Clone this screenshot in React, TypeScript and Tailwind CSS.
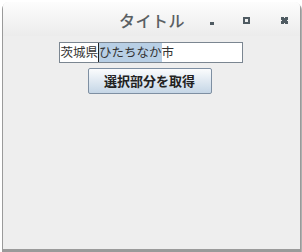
import React from "react";

export default function App() {
  const cjk = { fontFamily: '"Noto Sans CJK JP", "Noto Sans", sans-serif' };
  return (
    <div className="w-[302px] h-[252px] bg-white relative">
      <div className="absolute left-[2px] top-[1px] w-[299px] h-[250px] rounded-t-[6px] bg-[#9a9a9a] shadow-[1px_1px_1px_rgba(0,0,0,0.35)]" />
      <div className="relative ml-[3px] mt-[2px] w-[297px] h-[247px] rounded-t-[5px] overflow-hidden flex flex-col bg-[#eeeeee]">
        <div className="h-[34px] flex items-center bg-gradient-to-b from-[#fdfdfd] to-[#ececec] relative">
          <div
            className="absolute left-[116px] top-[6px] text-[16px] font-medium text-[#5a5f63] tracking-[0.5px]"
            style={cjk}
          >
            タイトル
          </div>
          <div className="absolute left-[207px] top-[20px] w-[4px] h-[3px] bg-[#4f5b62]" />
          <div className="absolute left-[240px] top-[15px] w-[7px] h-[7px] bg-[#4f5b62] flex items-center justify-center">
            <div className="w-[3px] h-[3px] bg-[#f0f0f0]" />
          </div>
          <div className="absolute left-[278px] top-[15px] w-[7px] h-[7px]">
            <svg width="7" height="7" viewBox="0 0 7 7">
              <path d="M0 0h3v1h1v-1h3v3h-1v1h1v3h-3v-1h-1v1h-3v-3h1v-1h-1z" fill="#4f5b62" />
            </svg>
          </div>
        </div>
        <div className="flex flex-col items-center pt-[6px]">
          <div className="ml-[-2px] w-[184px] h-[21px] border border-[#7b8691] bg-white flex items-stretch pl-[1px] text-[12.5px] text-[#333] leading-none" style={cjk}>
            <span className="flex items-center">茨城県</span>
            <span className="flex items-center bg-[#b8cfe5] border-l border-[#222]">ひたちなか</span>
            <span className="flex items-center">市</span>
          </div>
          <button
            className="mt-[5px] ml-[-4px] w-[124px] h-[26px] border border-[#7e8fa2] rounded-[2px] bg-gradient-to-b from-[#fbfcfd] to-[#c5d6e6] text-[13px] font-bold text-[#222] flex items-center justify-center"
            style={cjk}
          >
            選択部分を取得
          </button>
        </div>
      </div>
    </div>
  );
}
